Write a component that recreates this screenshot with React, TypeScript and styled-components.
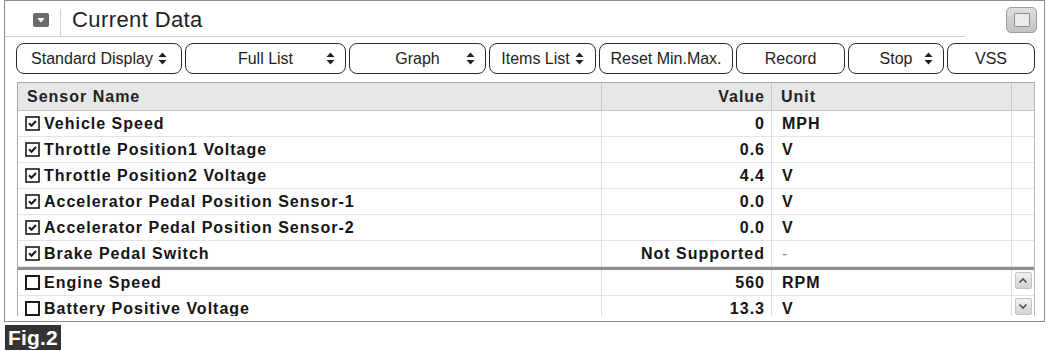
import React from "react";
import styled, { createGlobalStyle } from "styled-components";

const GlobalStyle = createGlobalStyle`
  html, body { margin: 0; padding: 0; background: #ffffff; }
  body {
    font-family: "Liberation Sans", Arial, sans-serif;
    color: #111111;
    width: 1050px;
    height: 351px;
    overflow: hidden;
  }
  * { box-sizing: border-box; }
`;

const Page = styled.div`
  width: 1050px;
  height: 351px;
  padding-left: 4px;
  display: flex;
  flex-direction: column;
`;

const Frame = styled.div`
  width: 1041px;
  height: 322px;
  border: 1px solid #8c8c8c;
  display: flex;
  flex-direction: column;
  overflow: hidden;
`;

const TitleBar = styled.div`
  display: flex;
  flex: none;
`;

const TitleLeft = styled.div`
  width: 960px;
  height: 36px;
  border-bottom: 1px solid #cfcfcf;
  display: flex;
  align-items: center;
  padding: 2px 0 0 28px;
`;

const TitleSeparator = styled.div`
  width: 1px;
  height: 27px;
  background: #d2d2d2;
  align-self: flex-end;
  margin: 0 11px;
`;

const TitleText = styled.div`
  font-size: 22px;
  line-height: 1;
  letter-spacing: 0.4px;
  color: #222222;
`;

const TitleRight = styled.div`
  flex: 1;
  display: flex;
  justify-content: flex-end;
  padding: 6px 7px 0 0;
`;

const MaxButton = styled.div`
  width: 31px;
  height: 26px;
  border: 1px solid #9c9c9c;
  border-radius: 5px;
  background: linear-gradient(#dedede, #c2c2c2);
  display: flex;
  align-items: center;
  justify-content: center;
`;

const MaxInner = styled.div`
  width: 16px;
  height: 14px;
  border: 1px solid #8e8e8e;
  border-radius: 1px;
  background: #ebebeb;
`;

const Toolbar = styled.div`
  display: flex;
  gap: 3px;
  padding-left: 11px;
  margin-top: 6px;
  flex: none;
`;

const ButtonLabel = styled.span`
  white-space: nowrap;
`;

const ArrowSlot = styled.span`
  display: flex;
  align-items: center;
`;

const ToolButton = styled.div<{ $w: number; $split?: boolean }>`
  width: ${(p) => p.$w}px;
  height: 31px;
  flex: none;
  border: 1.5px solid #2b2b2b;
  border-radius: 8px;
  background: #ffffff;
  font-size: 16px;
  color: #1e1e1e;
  padding: 0 10px;
  display: ${(p) => (p.$split ? "grid" : "flex")};
  grid-template-columns: 1fr auto 1fr;
  align-items: center;
  justify-content: center;
  gap: ${(p) => (p.$split ? "0" : "5px")};

  ${ButtonLabel} {
    grid-column: ${(p) => (p.$split ? 2 : "auto")};
  }
  ${ArrowSlot} {
    grid-column: ${(p) => (p.$split ? 3 : "auto")};
    justify-self: end;
  }
`;

const Table = styled.div`
  margin: 8px 0 5px 12px;
  width: 1018px;
  flex: 1;
  min-height: 0;
  overflow: hidden;
  display: flex;
  flex-direction: column;
  border-left: 1px solid #a9a9a9;
  border-top: 1px solid #a9a9a9;
  border-right: 1px solid #b9b9b9;
`;

const COLS = "584px 170px 240px 22px";

const HeaderRow = styled.div`
  display: grid;
  grid-template-columns: ${COLS};
  height: 28px;
  flex: none;
  background: #e7e7e7;
  border-bottom: 1px solid #c2c2c2;
`;

const HeaderCell = styled.div<{ $align?: "left" | "right" }>`
  display: flex;
  align-items: center;
  justify-content: ${(p) => (p.$align === "right" ? "flex-end" : "flex-start")};
  padding: ${(p) => (p.$align === "right" ? "0 6px 0 0" : "0 0 0 9px")};
  border-right: 1px solid #c6c6c6;
  font-weight: 700;
  font-size: 16px;
  letter-spacing: 1px;
  color: #222222;
  &:last-child { border-right: none; }
`;

const Section = styled.div<{ $lower?: boolean }>`
  flex: none;
  border-top: ${(p) => (p.$lower ? "3px solid #8e8e8e" : "none")};
`;

const Row = styled.div`
  display: grid;
  grid-template-columns: ${COLS};
  height: 26px;
  border-bottom: 1px solid #e4e4e4;
`;

const Cell = styled.div`
  display: flex;
  align-items: center;
  border-right: 1px solid #dedede;
  font-weight: 700;
  font-size: 16px;
  letter-spacing: 1px;
  white-space: nowrap;
  color: #141414;
  &:last-child { border-right: none; }
`;

const NameCell = styled(Cell)`
  padding-left: 7px;
  gap: 4px;
`;

const ValueCell = styled(Cell)`
  justify-content: flex-end;
  padding-right: 6px;
`;

const UnitCell = styled(Cell)<{ $muted?: boolean }>`
  padding-left: 10px;
  color: ${(p) => (p.$muted ? "#8a8a8a" : "#141414")};
  font-weight: ${(p) => (p.$muted ? 400 : 700)};
`;

const ScrollCell = styled(Cell)`
  align-items: flex-start;
  justify-content: center;
  padding-top: 2px;
`;

const ScrollButton = styled.div`
  width: 17px;
  height: 17px;
  border: 1px solid #c2c2c2;
  border-radius: 2px;
  background: linear-gradient(#f2f2f2, #d3d3d3);
  display: flex;
  align-items: center;
  justify-content: center;
`;

const FigLabel = styled.div`
  margin: 3px 0 0 1px;
  width: 56px;
  height: 25px;
  background: #333333;
  color: #ffffff;
  font-weight: 700;
  font-size: 21px;
  letter-spacing: 0.2px;
  display: flex;
  align-items: center;
  padding-left: 3px;
`;

const DropIcon = () => (
  <svg width="16" height="14" viewBox="0 0 16 14">
    <rect x="0" y="0" width="16" height="14" rx="2" fill="#6a6a6a" />
    <path d="M4.3 5 L11.7 5 L8 9.6 Z" fill="#ffffff" />
  </svg>
);

const SortArrows = () => (
  <svg width="9" height="13" viewBox="0 0 9 13">
    <path d="M4.5 0.5 L8.5 5 L0.5 5 Z" fill="#222" />
    <path d="M0.5 8 L8.5 8 L4.5 12.5 Z" fill="#222" />
  </svg>
);

const CheckBox = ({ checked }: { checked: boolean }) => (
  <svg width="15" height="15" viewBox="0 0 15 15" style={{ flex: "none" }}>
    <rect
      x="1"
      y="1"
      width="13"
      height="13"
      fill="#ffffff"
      stroke="#1a1a1a"
      strokeWidth={checked ? 1.6 : 2}
    />
    {checked && (
      <path d="M4 7.2 L6.5 9.7 L11 5" fill="none" stroke="#1a1a1a" strokeWidth="2" />
    )}
  </svg>
);

const Chevron = ({ up }: { up: boolean }) => (
  <svg width="10" height="7" viewBox="0 0 10 7">
    <path
      d={up ? "M1.5 5.5 L5 2 L8.5 5.5" : "M1.5 1.5 L5 5 L8.5 1.5"}
      fill="none"
      stroke="#555"
      strokeWidth="1.7"
    />
  </svg>
);

type Btn = { label: string; w: number; arrow?: boolean; split?: boolean };

const buttons: Btn[] = [
  { label: "Standard Display", w: 166, arrow: true },
  { label: "Full List", w: 161, arrow: true, split: true },
  { label: "Graph", w: 137, arrow: true, split: true },
  { label: "Items List", w: 107, arrow: true },
  { label: "Reset Min.Max.", w: 134 },
  { label: "Record", w: 109 },
  { label: "Stop", w: 96, arrow: true, split: true },
  { label: "VSS", w: 88 },
];

type Item = { name: string; value: string; unit: string; checked: boolean; muted?: boolean };

const upper: Item[] = [
  { name: "Vehicle Speed", value: "0", unit: "MPH", checked: true },
  { name: "Throttle Position1 Voltage", value: "0.6", unit: "V", checked: true },
  { name: "Throttle Position2 Voltage", value: "4.4", unit: "V", checked: true },
  { name: "Accelerator Pedal Position Sensor-1", value: "0.0", unit: "V", checked: true },
  { name: "Accelerator Pedal Position Sensor-2", value: "0.0", unit: "V", checked: true },
  { name: "Brake Pedal Switch", value: "Not Supported", unit: "-", checked: true, muted: true },
];

const lower: Item[] = [
  { name: "Engine Speed", value: "560", unit: "RPM", checked: false },
  { name: "Battery Positive Voltage", value: "13.3", unit: "V", checked: false },
];

export default function App() {
  return (
    <>
      <GlobalStyle />
      <Page>
        <Frame>
          <TitleBar>
            <TitleLeft>
              <DropIcon />
              <TitleSeparator />
              <TitleText>Current Data</TitleText>
            </TitleLeft>
            <TitleRight>
              <MaxButton>
                <MaxInner />
              </MaxButton>
            </TitleRight>
          </TitleBar>
          <Toolbar>
            {buttons.map((b) => (
              <ToolButton key={b.label} $w={b.w} $split={b.split}>
                <ButtonLabel>{b.label}</ButtonLabel>
                {b.arrow && (
                  <ArrowSlot>
                    <SortArrows />
                  </ArrowSlot>
                )}
              </ToolButton>
            ))}
          </Toolbar>
          <Table>
            <HeaderRow>
              <HeaderCell>Sensor Name</HeaderCell>
              <HeaderCell $align="right">Value</HeaderCell>
              <HeaderCell>Unit</HeaderCell>
              <HeaderCell />
            </HeaderRow>
            <Section>
              {upper.map((it) => (
                <Row key={it.name}>
                  <NameCell>
                    <CheckBox checked={it.checked} />
                    {it.name}
                  </NameCell>
                  <ValueCell>{it.value}</ValueCell>
                  <UnitCell $muted={it.muted}>{it.unit}</UnitCell>
                  <Cell />
                </Row>
              ))}
            </Section>
            <Section $lower>
              {lower.map((it, i) => (
                <Row key={it.name}>
                  <NameCell>
                    <CheckBox checked={it.checked} />
                    {it.name}
                  </NameCell>
                  <ValueCell>{it.value}</ValueCell>
                  <UnitCell>{it.unit}</UnitCell>
                  <ScrollCell>
                    <ScrollButton>
                      <Chevron up={i === 0} />
                    </ScrollButton>
                  </ScrollCell>
                </Row>
              ))}
            </Section>
          </Table>
        </Frame>
        <FigLabel>Fig.2</FigLabel>
      </Page>
    </>
  );
}
